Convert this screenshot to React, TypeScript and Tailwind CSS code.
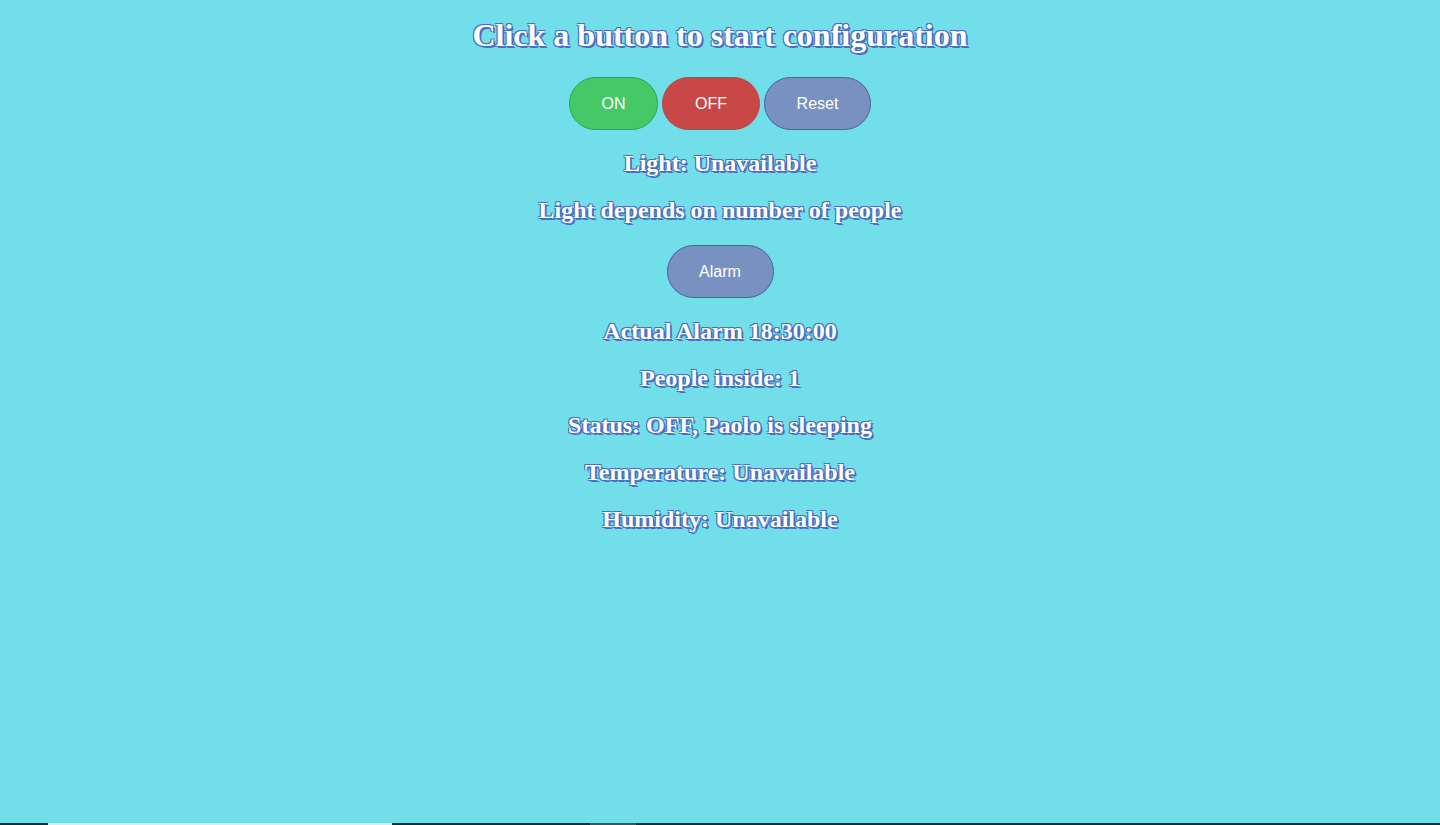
const shadow = '[text-shadow:2px_2px_0_#4a6fbf,-1px_-1px_0_#4a6fbf,1px_-1px_0_#4a6fbf,-1px_1px_0_#4a6fbf]';

const lines = [
  'Actual Alarm 18:30:00',
  'People inside: 1',
  'Status: OFF, Paolo is sleeping',
  'Temperature: Unavailable',
  'Humidity: Unavailable',
];

function Line({ children }: { children: React.ReactNode }) {
  return (
    <p className={`text-[24px] font-bold leading-[47px] text-white text-center ${shadow}`}>{children}</p>
  );
}

export default function App() {
  return (
    <div className="min-h-screen h-[825px] flex flex-col bg-[#72deea] font-['Liberation_Serif',serif]">
      <div className="flex flex-col items-center">
        {/* Header */}
        <h1 className={`mt-[12px] text-[32px] font-bold leading-[47px] text-white ${shadow}`}>
          Click a button to start configuration
        </h1>

        {/* Main controls */}
        <div className="mt-[18px] flex gap-[4px] font-['Liberation_Sans',Arial,sans-serif] text-[16px] text-white">
          <button className="h-[53px] w-[89px] rounded-full border border-[#2aa845] bg-[#45c866]">ON</button>
          <button className="h-[53px] w-[98px] rounded-full border border-[#c04444] bg-[#c84848]">OFF</button>
          <button className="h-[53px] w-[107px] rounded-full border border-[#4d6298] bg-[#7891c0]">Reset</button>
        </div>

        <div className="mt-[10px]">
          <Line>Light: Unavailable</Line>
          <Line>Light depends on number of people</Line>
        </div>

        <button className="mt-[11px] h-[53px] w-[107px] rounded-full border border-[#4d6298] bg-[#7891c0] font-['Liberation_Sans',Arial,sans-serif] text-[16px] text-white">
          Alarm
        </button>

        <div className="mt-[10px]">
          {lines.map((l) => (
            <Line key={l}>{l}</Line>
          ))}
        </div>
      </div>

      {/* bottom strip */}
      <div className="mt-auto flex h-[2px] bg-[#1f2d2f]">
        <div className="w-[48px]" />
        <div className="w-[344px] bg-[#e6e6e6]" />
        <div className="w-[198px]" />
        <div className="w-[46px] bg-[#4a4f50]" />
      </div>
    </div>
  );
}
